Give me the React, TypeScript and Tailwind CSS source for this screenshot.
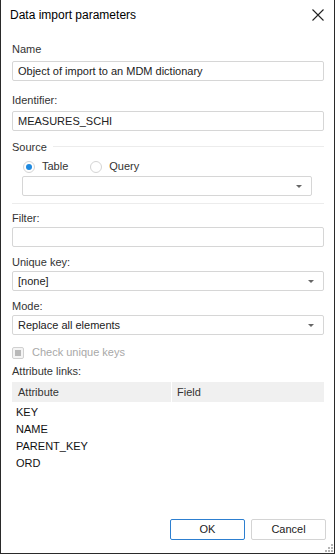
import React from "react";

const font = { fontFamily: '"Liberation Sans", Arial, sans-serif' };

function Label({ children, className = "" }: { children: React.ReactNode; className?: string }) {
  return <div className={`h-[15px] text-[11px] leading-[15px] text-[#333] ${className}`}>{children}</div>;
}

function Input({ value = "", className = "" }: { value?: string; className?: string }) {
  return (
    <div className={`h-[20px] border border-[#d6d6d6] rounded-[2px] bg-white flex items-center px-[5px] text-[11px] text-[#222] ${className}`}>
      {value}
    </div>
  );
}

function Arrow() {
  return (
    <svg width="6" height="3" viewBox="0 0 6 3" className="shrink-0">
      <path d="M0 0 H6 L3 3 Z" fill="#666" />
    </svg>
  );
}

function Select({ value = "", className = "" }: { value?: string; className?: string }) {
  return (
    <div className={`h-[20px] border border-[#d6d6d6] rounded-[2px] bg-white flex items-center pl-[5px] pr-[9px] text-[11px] text-[#222] ${className}`}>
      <span className="flex-1">{value}</span>
      <Arrow />
    </div>
  );
}

export default function App() {
  return (
    <div style={font} className="w-[335px] h-[554px] bg-white border-l border-r border-b border-[#2a2a2a] flex flex-col relative overflow-hidden">
      {/* Title bar */}
      <div className="h-[33px] flex items-start justify-between pl-[9px] pr-[9px] pt-[8px]">
        <span className="text-[12px] leading-[15px] text-black">Data import parameters</span>
        <svg width="12" height="12" viewBox="0 0 12 12" className="mt-[1px] mr-[1px]">
          <path d="M0.5 0.5 L11.5 11.5 M11.5 0.5 L0.5 11.5" stroke="#222" strokeWidth="1.1" />
        </svg>
      </div>
      <div className="flex flex-col pl-[11px] pr-[10px]">
        <Label className="mt-[9px]">Name</Label>
        <Input className="mt-[4px]" value="Object of import to an MDM dictionary" />
        <Label className="mt-[12px]">Identifier:</Label>
        <Input className="mt-[3px]" value="MEASURES_SCHI" />
        <div className="mt-[9px] h-[15px] flex items-center gap-[6px]">
          <span className="text-[11px] leading-[15px] text-[#333]">Source</span>
          <div className="flex-1 h-px bg-[#ececec] mt-[-2px]" />
        </div>
        <div className="mt-[3px] pl-[11px] flex items-center h-[17px] text-[11px] text-[#333]">
          <div className="w-[12px] h-[12px] rounded-full border border-[#d4d4d4] flex items-center justify-center">
            <div className="w-[6px] h-[6px] rounded-full bg-[#1f8ae0]" />
          </div>
          <span className="ml-[7px]">Table</span>
          <div className="ml-[22px] w-[12px] h-[12px] rounded-full border border-[#d4d4d4]" />
          <span className="ml-[7px]">Query</span>
        </div>
        <Select className="mt-[1px] ml-[10px] mr-[12px]" />
        <div className="mt-[7px] h-px bg-[#ececec]" />
        <Label className="mt-[7px]">Filter:</Label>
        <Input className="mt-[1px]" />
        <Label className="mt-[8px]">Unique key:</Label>
        <Select className="mt-[1px]" value="[none]" />
        <Label className="mt-[8px]">Mode:</Label>
        <Select className="mt-[1px]" value="Replace all elements" />
        <div className="mt-[11px] h-[13px] flex items-center">
          <div className="w-[12px] h-[12px] rounded-[2px] border border-[#d0d0d0] bg-[#f4f4f4] flex items-center justify-center">
            <div className="w-[6px] h-[6px] bg-[#b8b8b8]" />
          </div>
          <span className="ml-[8px] text-[11px] text-[#a8a8a8]">Check unique keys</span>
        </div>
        <Label className="mt-[5px]">Attribute links:</Label>
        <div className="mt-[3px] h-[20px] bg-[#f0f0f0] flex text-[11px] text-[#333]">
          <div className="w-[160px] border-r border-white pl-[6px] flex items-center">Attribute</div>
          <div className="flex-1 pl-[5px] flex items-center">Field</div>
        </div>
        <div className="mt-[2px] flex flex-col text-[11px] text-[#111] pl-[4px]">
          <div className="h-[17px] leading-[17px]">KEY</div>
          <div className="h-[17px] leading-[17px]">NAME</div>
          <div className="h-[17px] leading-[17px]">PARENT_KEY</div>
          <div className="h-[17px] leading-[17px]">ORD</div>
        </div>
      </div>
      <div className="flex-1" />
      <div className="flex justify-end gap-[6px] pr-[8px] pb-[13px]">
        <div className="w-[75px] h-[21px] border border-[#2d7fd0] rounded-[2px] flex items-center justify-center text-[11px] text-[#222]">OK</div>
        <div className="w-[75px] h-[21px] border border-[#d4d4d4] rounded-[2px] flex items-center justify-center text-[11px] text-[#222]">Cancel</div>
      </div>
      <svg width="11" height="11" viewBox="0 0 11 11" className="absolute right-[0px] bottom-[0px]">
        {[
          [8, 2],
          [5, 5], [8, 5],
          [2, 8], [5, 8], [8, 8],
        ].map(([x, y], i) => (
          <rect key={i} x={x} y={y} width="2" height="2" fill="#b5b5b5" />
        ))}
      </svg>
    </div>
  );
}
